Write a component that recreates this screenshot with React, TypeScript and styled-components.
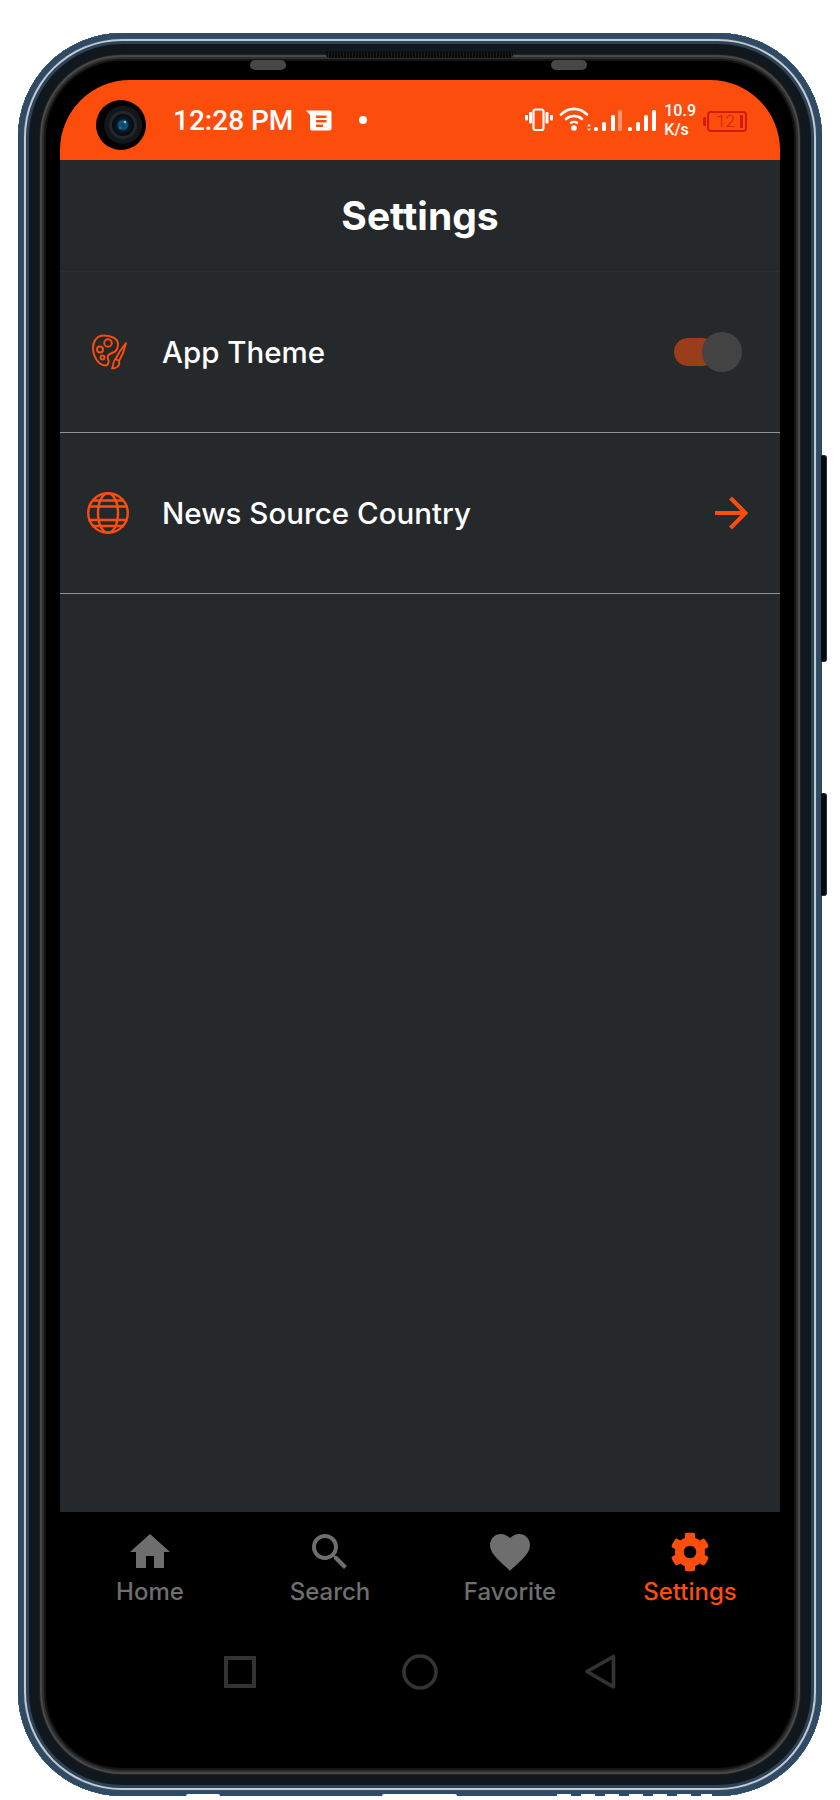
import React from "react";
import styled, { createGlobalStyle } from "styled-components";
import { MdHome, MdSearch, MdFavorite } from "react-icons/md";
import { FaCog } from "react-icons/fa";

const Global = createGlobalStyle`
  html, body { margin: 0; padding: 0; background: #fff; }
  body { width: 840px; height: 1800px; overflow: hidden; font-family: "Inter", "Liberation Sans", sans-serif; }
`;

const Page = styled.div`
  width: 840px;
  height: 1800px;
  padding: 33px 18px 4px;
  box-sizing: border-box;
  background: #fff;
`;

const Phone = styled.div`
  position: relative;
  height: 100%;
  box-sizing: border-box;
  padding: 47px 42px 30px;
  border-radius: 104px;
  background: #000;
  box-shadow:
    inset 0 0 0 5px #2e4a64,
    inset 0 0 0 6px #3a5268,
    inset 0 0 0 8px #c2c9d0,
    inset 0 0 0 11px #2c4257,
    inset 0 0 0 21px #10181e,
    inset 0 0 0 22px #1f2122,
    inset 0 0 0 24px #484848,
    inset 0 0 0 26px #2e2e2e,
    inset 0 0 0 28px #141414;
`;

const SideKey = styled.div<{ $top: number; $height: number }>`
  position: absolute;
  right: -5px;
  top: ${(p) => p.$top}px;
  width: 6px;
  height: ${(p) => p.$height}px;
  box-sizing: border-box;
  background: #05090c;
  border: 1px solid #1f3244;
  border-left: none;
  border-radius: 0 3px 3px 0;
`;

const Grille = styled.div`
  position: absolute;
  left: 308px;
  top: 18px;
  width: 187px;
  height: 7px;
  border-radius: 0 0 4px 4px;
  background: repeating-linear-gradient(90deg, #0a0a0a 0 2px, #1a1c1e 2px 3px);
`;

const SensorPill = styled.div<{ $left: number }>`
  position: absolute;
  left: ${(p) => p.$left}px;
  top: 27px;
  width: 36px;
  height: 10px;
  border-radius: 5px;
  background: #474747;
`;

const EdgeNotch = styled.div<{ $left: number; $width: number }>`
  position: absolute;
  bottom: 0;
  left: ${(p) => p.$left}px;
  width: ${(p) => p.$width}px;
  height: 2px;
  border-radius: 3px 3px 0 0;
  background: #fff;
`;

const EdgeHoles = styled.div`
  position: absolute;
  bottom: 0;
  left: 539px;
  width: 155px;
  height: 2px;
  background: repeating-linear-gradient(90deg, #fff 0 14px, #2e4a64 14px 24px);
`;

const Screen = styled.div`
  height: 100%;
  display: flex;
  flex-direction: column;
  border-radius: 70px 70px 64px 64px;
  overflow: hidden;
  background: #000;
`;

const StatusBar = styled.div`
  height: 80px;
  flex: none;
  display: flex;
  align-items: center;
  padding: 0 33px 0 36px;
  background: #fd4d0c;
  color: #fff;
  font-family: "Roboto", sans-serif;
`;

const CameraHole = styled.svg`
  display: block;
  flex: none;
  transform: translateY(5px);
`;

const Clock = styled.span`
  margin-left: 27px;
  font-size: 28px;
  line-height: 32px;
  font-weight: 500;
  color: #fff;
  transform: translateY(1px);
`;

const StatusSvg = styled.svg<{ $ml: number }>`
  display: block;
  flex: none;
  margin-left: ${(p) => p.$ml}px;
`;

const IndicatorSvg = styled.svg`
  display: block;
  flex: none;
  margin-left: auto;
`;

const Speed = styled.div`
  margin-left: 7px;
  font-size: 16px;
  line-height: 19px;
  font-weight: 500;
  color: #fff;
`;

const Battery = styled.div`
  margin-left: 7px;
  display: flex;
  align-items: center;
  transform: translateY(1px);
`;

const BatteryTip = styled.div`
  width: 3px;
  height: 9px;
  margin-right: 1px;
  background: #d11a08;
  border-radius: 2px 0 0 2px;
`;

const BatteryBody = styled.div`
  width: 40px;
  height: 21px;
  box-sizing: border-box;
  border: 2px solid #d11a08;
  border-radius: 4px;
  display: flex;
  align-items: center;
  justify-content: flex-end;
  padding-right: 2px;
  color: #cc2208;
  font-size: 17px;
  font-weight: 300;
  line-height: 17px;
  gap: 5px;
`;

const BatteryFill = styled.div`
  width: 3px;
  height: 13px;
  background: #d11a08;
`;

const Content = styled.div`
  flex: 1;
  display: flex;
  flex-direction: column;
  background: #25292c;
`;

const Header = styled.header`
  height: 112px;
  flex: none;
  display: flex;
  align-items: center;
  justify-content: center;
  box-sizing: border-box;
  border-bottom: 1px solid #2a2e31;
`;

const Title = styled.h1`
  margin: 0;
  font-size: 39px;
  font-weight: 700;
  color: #fff;
`;

const Row = styled.div`
  height: 161px;
  box-sizing: border-box;
  flex: none;
  display: flex;
  align-items: center;
  border-bottom: 1px solid #8f9193;
  padding: 0 32px 0 27px;
`;

const RowIcon = styled.div`
  width: 42px;
  display: flex;
  justify-content: center;
  flex: none;
`;

const RowLabel = styled.span`
  margin-left: 33px;
  flex: 1;
  font-size: 29.5px;
  font-weight: 500;
  color: #fff;
`;

const Toggle = styled.div`
  position: relative;
  width: 42px;
  height: 28px;
  margin-right: 32px;
  border-radius: 14px;
  background: #993d1a;
`;

const Thumb = styled.div`
  position: absolute;
  left: 28px;
  top: -6px;
  width: 40px;
  height: 40px;
  border-radius: 50%;
  background: #434343;
`;

const BottomNav = styled.nav`
  flex: none;
  height: 122px;
  display: grid;
  grid-template-columns: repeat(4, 1fr);
  background: #000;
`;

const NavItem = styled.div<{ $active?: boolean }>`
  display: flex;
  flex-direction: column;
  align-items: center;
  padding-top: 16px;
  color: ${(p) => (p.$active ? "#fd4d0c" : "#6e6e6e")};
  font-size: 24px;
  font-weight: 500;
`;

const NavIconBox = styled.div`
  height: 48px;
  display: flex;
  align-items: center;
  justify-content: center;
`;

const NavLabel = styled.span`
  margin-top: 1px;
  line-height: 30px;
`;

const SystemBar = styled.div`
  flex: none;
  height: 132px;
  background: #000;
  display: flex;
  align-items: center;
  justify-content: center;
  gap: 146px;
  padding-bottom: 56px;
  box-sizing: border-box;
`;

const Camera = () => (
  <CameraHole width="50" height="50" viewBox="0 0 50 50">
    <defs>
      <radialGradient id="lens" cx="50%" cy="50%" r="50%">
        <stop offset="0" stopColor="#0d3f5e" />
        <stop offset="0.35" stopColor="#0f5a85" />
        <stop offset="0.55" stopColor="#0a1a26" />
        <stop offset="1" stopColor="#05090c" />
      </radialGradient>
    </defs>
    <circle cx="25" cy="25" r="25" fill="#000" />
    <circle cx="27" cy="25" r="19" fill="#14171a" />
    <circle cx="27" cy="25" r="14" fill="#23272a" />
    <circle cx="27" cy="25" r="11" fill="url(#lens)" />
    <circle cx="29" cy="22" r="1.3" fill="#7fc8e8" />
    <circle cx="24" cy="28" r="0.8" fill="#4aa0c8" />
  </CameraHole>
);

const NoteIcon = () => (
  <StatusSvg $ml={13} width="26" height="21" viewBox="0 0 26 21">
    <path d="M0 0.5H23.5a2 2 0 0 1 2 2V18.5a2 2 0 0 1-2 2H6a2 2 0 0 1-2-2V5Z" fill="#fff" />
    <path d="M10 5.5H20.5V8H10ZM10 10H20.5V12.5H10ZM10 14.5H17V17H10Z" fill="#fd4d0c" />
  </StatusSvg>
);

const Dot = () => (
  <StatusSvg $ml={27} width="8" height="8" viewBox="0 0 8 8">
    <circle cx="4" cy="4" r="4" fill="#fff" />
  </StatusSvg>
);

const bars = [
  [69, 127, 4],
  [77, 122, 9],
  [86, 115, 16],
  [93, 110, 21],
  [103, 127, 4],
  [111, 122, 9],
  [119, 115, 16],
  [127, 110, 21],
];

const Indicators = () => (
  <IndicatorSvg width="132" height="30" viewBox="0 105 132 30">
    <rect x="0" y="115" width="3" height="5.5" rx="1" fill="#fff" />
    <rect x="4" y="112" width="3" height="11.5" rx="1" fill="#fff" />
    <rect x="8.5" y="109.5" width="10" height="20.5" rx="2" fill="none" stroke="#fff" strokeWidth="2.2" />
    <rect x="20.5" y="112" width="3" height="11.5" rx="1" fill="#fff" />
    <rect x="25" y="115" width="3" height="5.5" rx="1" fill="#fff" />
    <g fill="none" stroke="#fff" strokeWidth="2.6" strokeLinecap="round">
      <path d="M36 114.5C43.5 107 54.5 107 62 114.5" />
      <path d="M41 119C45.5 115 52.5 115 57 119" />
    </g>
    <circle cx="49" cy="128" r="2.8" fill="#fff" />
    <path d="M46 122.7C47.5 121.7 50.5 121.7 52 122.7" fill="none" stroke="#fff" strokeWidth="2.4" strokeLinecap="round" />
    <path d="M64 124l-2 2.2h4ZM64 131l-2-2.2h4Z" fill="#fff" />
    {bars.map(([x, y, h], i) => (
      <rect key={i} x={x} y={y} width="4" height={h} rx="1.6" fill="#fff" opacity={i === 3 ? 0.4 : 1} />
    ))}
  </IndicatorSvg>
);

const PaletteIcon = () => (
  <svg width="40" height="36" viewBox="-4 0 40 36" fill="none" stroke="#fd4d0c" strokeWidth="1.9" strokeLinejoin="round" style={{ display: "block" }}>
    <path d="M12 1.5C5 1.5 1 7 1 14C1 22 6 31 13 31.5C17 31.5 17 27 16 25C15 22 17 20 20 19C24 18 26 15 26 10C26 5 20 1.5 12 1.5Z" />
    <circle cx="16" cy="9" r="3.8" />
    <circle cx="8" cy="15.5" r="3" />
    <circle cx="10.5" cy="23.5" r="2" />
    <path d="M34 9L31 19L27 27L23.5 25L28 17Z" />
    <path d="M23.5 25C20.5 27 22 31 20 34.5C24.5 34.5 28.5 32 27 27" />
  </svg>
);

const GlobeIcon = () => (
  <svg width="42" height="42" viewBox="0 0 42 42" fill="none" stroke="#fd4d0c" strokeWidth="2.4" style={{ display: "block" }}>
    <circle cx="21" cy="21" r="19.8" />
    <ellipse cx="21" cy="21" rx="10" ry="19.8" />
    <path d="M1.5 14.5H40.5M1.5 28H40.5M5 8.5H37M5 34H37" />
  </svg>
);

const ArrowIcon = () => (
  <svg width="34" height="34" viewBox="0 0 34 34" fill="none" stroke="#fd4d0c" strokeWidth="4" style={{ display: "block", flex: "none" }}>
    <path d="M1 17H31M16.5 2L31.5 17L16.5 32" />
  </svg>
);

const Square = () => (
  <svg width="32" height="32" viewBox="0 0 32 32" style={{ display: "block" }}>
    <rect x="2" y="2" width="28" height="28" fill="none" stroke="#333" strokeWidth="4" />
  </svg>
);

const Circle = () => (
  <svg width="36" height="36" viewBox="0 0 36 36" style={{ display: "block" }}>
    <circle cx="18" cy="18" r="16" fill="none" stroke="#333" strokeWidth="3.6" />
  </svg>
);

const Back = () => (
  <svg width="32" height="36" viewBox="0 0 32 36" style={{ display: "block" }}>
    <path d="M29.5 2.5V33L3 17.5Z" fill="none" stroke="#333" strokeWidth="3.6" strokeLinejoin="round" />
  </svg>
);

export default function App() {
  return (
    <>
      <Global />
      <Page>
        <Phone>
          <Grille />
          <SensorPill $left={232} />
          <SensorPill $left={533} />
          <SideKey $top={422} $height={207} />
          <SideKey $top={760} $height={103} />
          <EdgeNotch $left={168} $width={34} />
          <EdgeNotch $left={364} $width={75} />
          <EdgeHoles />
          <Screen>
            <StatusBar>
              <Camera />
              <Clock>12:28 PM</Clock>
              <NoteIcon />
              <Dot />
              <Indicators />
              <Speed>
                10.9
                <br />
                K/s
              </Speed>
              <Battery>
                <BatteryTip />
                <BatteryBody>
                  12
                  <BatteryFill />
                </BatteryBody>
              </Battery>
            </StatusBar>
            <Content>
              <Header>
                <Title>Settings</Title>
              </Header>
              <Row>
                <RowIcon>
                  <PaletteIcon />
                </RowIcon>
                <RowLabel>App Theme</RowLabel>
                <Toggle>
                  <Thumb />
                </Toggle>
              </Row>
              <Row>
                <RowIcon>
                  <GlobeIcon />
                </RowIcon>
                <RowLabel>News Source Country</RowLabel>
                <ArrowIcon />
              </Row>
            </Content>
            <BottomNav>
              <NavItem>
                <NavIconBox>
                  <MdHome size={48} />
                </NavIconBox>
                <NavLabel>Home</NavLabel>
              </NavItem>
              <NavItem>
                <NavIconBox>
                  <MdSearch size={48} />
                </NavIconBox>
                <NavLabel>Search</NavLabel>
              </NavItem>
              <NavItem>
                <NavIconBox>
                  <MdFavorite size={48} />
                </NavIconBox>
                <NavLabel>Favorite</NavLabel>
              </NavItem>
              <NavItem $active>
                <NavIconBox>
                  <FaCog size={40} />
                </NavIconBox>
                <NavLabel>Settings</NavLabel>
              </NavItem>
            </BottomNav>
            <SystemBar>
              <Square />
              <Circle />
              <Back />
            </SystemBar>
          </Screen>
        </Phone>
      </Page>
    </>
  );
}
